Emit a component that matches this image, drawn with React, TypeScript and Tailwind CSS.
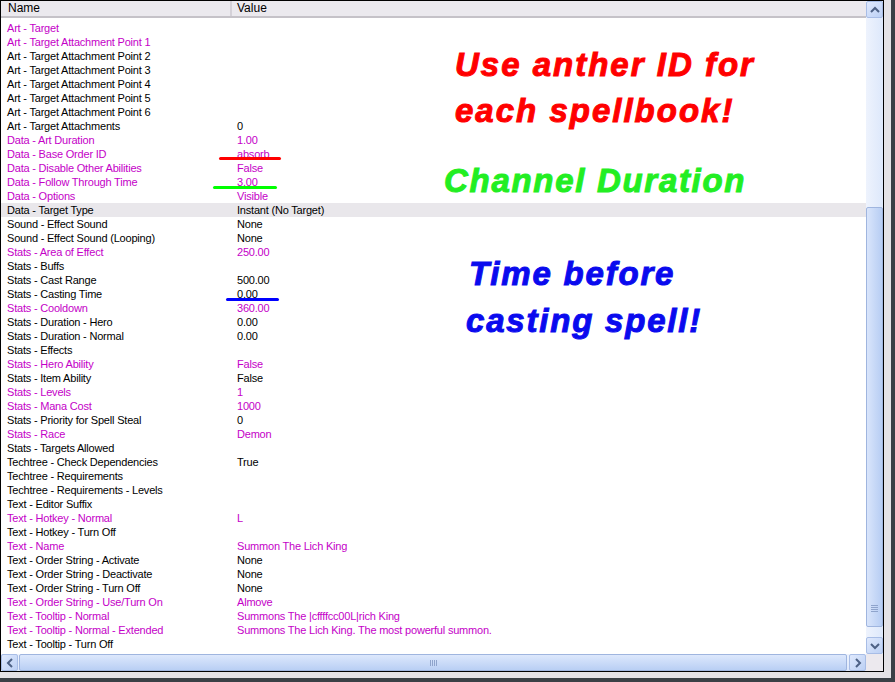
import React from 'react';

type Row = { name: string; value?: string; mod?: boolean; sel?: boolean };

const ROWS: Row[] = [
  { name: 'Art - Target', mod: true },
  { name: 'Art - Target Attachment Point 1', mod: true },
  { name: 'Art - Target Attachment Point 2' },
  { name: 'Art - Target Attachment Point 3' },
  { name: 'Art - Target Attachment Point 4' },
  { name: 'Art - Target Attachment Point 5' },
  { name: 'Art - Target Attachment Point 6' },
  { name: 'Art - Target Attachments', value: '0' },
  { name: 'Data - Art Duration', value: '1.00', mod: true },
  { name: 'Data - Base Order ID', value: 'absorb', mod: true },
  { name: 'Data - Disable Other Abilities', value: 'False', mod: true },
  { name: 'Data - Follow Through Time', value: '3.00', mod: true },
  { name: 'Data - Options', value: 'Visible', mod: true },
  { name: 'Data - Target Type', value: 'Instant (No Target)', sel: true },
  { name: 'Sound - Effect Sound', value: 'None' },
  { name: 'Sound - Effect Sound (Looping)', value: 'None' },
  { name: 'Stats - Area of Effect', value: '250.00', mod: true },
  { name: 'Stats - Buffs' },
  { name: 'Stats - Cast Range', value: '500.00' },
  { name: 'Stats - Casting Time', value: '0.00' },
  { name: 'Stats - Cooldown', value: '360.00', mod: true },
  { name: 'Stats - Duration - Hero', value: '0.00' },
  { name: 'Stats - Duration - Normal', value: '0.00' },
  { name: 'Stats - Effects' },
  { name: 'Stats - Hero Ability', value: 'False', mod: true },
  { name: 'Stats - Item Ability', value: 'False' },
  { name: 'Stats - Levels', value: '1', mod: true },
  { name: 'Stats - Mana Cost', value: '1000', mod: true },
  { name: 'Stats - Priority for Spell Steal', value: '0' },
  { name: 'Stats - Race', value: 'Demon', mod: true },
  { name: 'Stats - Targets Allowed' },
  { name: 'Techtree - Check Dependencies', value: 'True' },
  { name: 'Techtree - Requirements' },
  { name: 'Techtree - Requirements - Levels' },
  { name: 'Text - Editor Suffix' },
  { name: 'Text - Hotkey - Normal', value: 'L', mod: true },
  { name: 'Text - Hotkey - Turn Off' },
  { name: 'Text - Name', value: 'Summon The Lich King', mod: true },
  { name: 'Text - Order String - Activate', value: 'None' },
  { name: 'Text - Order String - Deactivate', value: 'None' },
  { name: 'Text - Order String - Turn Off', value: 'None' },
  { name: 'Text - Order String - Use/Turn On', value: 'Almove', mod: true },
  { name: 'Text - Tooltip - Normal', value: 'Summons The |cffffcc00L|rich King', mod: true },
  { name: 'Text - Tooltip - Normal - Extended', value: 'Summons The Lich King. The most powerful summon.', mod: true },
  { name: 'Text - Tooltip - Turn Off' },
  { name: 'Text - Tooltip - Turn Off - Extended' },
];

const ScrollBtn = ({ dir }: { dir: 'up' | 'down' | 'left' | 'right' }) => {
  const paths = {
    up: 'M3 9 L7 5 L11 9',
    down: 'M3 5 L7 9 L11 5',
    left: 'M9 3 L5 7 L9 11',
    right: 'M5 3 L9 7 L5 11',
  };
  return (
    <div className="w-[17px] h-[17px] rounded-[2px] border border-[#a8bde6] bg-gradient-to-br from-[#dfe9fd] to-[#bcd0f4] flex items-center justify-center">
      <svg width="14" height="14" viewBox="0 0 14 14">
        <path d={paths[dir]} fill="none" stroke="#4d6185" strokeWidth="2" />
      </svg>
    </div>
  );
};

export default function App() {
  return (
    <div className="w-[895px] h-[682px] bg-[#3b4046] overflow-hidden" style={{ fontFamily: '"Liberation Sans", Arial, sans-serif' }}>
      <div className="w-[891px] h-[678px] bg-[#e4e2e6] pr-[7px] pb-[6px]">
        <div className="w-[884px] h-[672px] border border-black bg-white flex flex-col relative">
          <div className="flex flex-1 min-h-0">
            {/* list */}
            <div className="flex-1 flex flex-col min-w-0">
              <div className="h-[17px] flex bg-[#ebe9ee] border-b-2 border-[#c5c2c8] text-[12px] text-black leading-[15px]">
                <div className="w-[231px] pl-[7px] border-r-2 border-[#d4d1d8]">Name</div>
                <div className="pl-[5px]">Value</div>
              </div>
              <div className="flex-1 overflow-hidden pt-[3px] text-[11px] tracking-[-0.2px]">
                {ROWS.map((r, i) => (
                  <div
                    key={i}
                    className={`h-[14px] leading-[14px] flex whitespace-nowrap ${r.sel ? 'bg-[#e9e7eb]' : ''} ${r.mod ? 'text-[#c400c8]' : 'text-black'}`}
                  >
                    <div className="w-[236px] pl-[6px]">{r.name}</div>
                    <div>{r.value}</div>
                  </div>
                ))}
              </div>
            </div>
            {/* vertical scrollbar */}
            <div className="w-[17px] flex flex-col bg-gradient-to-r from-[#eef3fd] to-[#dde8fb]">
              <ScrollBtn dir="up" />
              <div className="h-[189px]" />
              <div className="h-[420px] rounded-[2px] border border-[#9fb5df] bg-gradient-to-r from-[#d9e5fb] to-[#b7cdf3] flex items-end justify-center pb-[14px]">
                <div className="flex flex-col gap-[1px]">
                  <div className="w-[7px] h-[1px] bg-[#8fa4cc]" />
                  <div className="w-[7px] h-[1px] bg-[#8fa4cc]" />
                  <div className="w-[7px] h-[1px] bg-[#8fa4cc]" />
                  <div className="w-[7px] h-[1px] bg-[#8fa4cc]" />
                </div>
              </div>
              <div className="flex-1" />
              <ScrollBtn dir="down" />
            </div>
          </div>
          {/* horizontal scrollbar */}
          <div className="h-[17px] flex">
            <div className="flex-1 flex bg-gradient-to-b from-[#eef3fd] to-[#dde8fb]">
              <ScrollBtn dir="left" />
              <div className="flex-1 mx-[1px] rounded-[2px] border border-[#9fb5df] bg-gradient-to-b from-[#dde8fc] to-[#b9cff4] flex items-center justify-center">
                <div className="flex gap-[1px]">
                  <div className="w-[1px] h-[6px] bg-[#8fa4cc]" />
                  <div className="w-[1px] h-[6px] bg-[#8fa4cc]" />
                  <div className="w-[1px] h-[6px] bg-[#8fa4cc]" />
                  <div className="w-[1px] h-[6px] bg-[#8fa4cc]" />
                </div>
              </div>
              <div className="w-[1px]" />
              <ScrollBtn dir="right" />
            </div>
            <div className="w-[17px] bg-[#ece9ee]" />
          </div>

          {/* annotations */}
          <div className="absolute left-[218px] top-[156px] w-[62px] h-[3px] rounded-full bg-[#ff0000]" />
          <div className="absolute left-[212px] top-[185px] w-[64px] h-[3px] rounded-full bg-[#00ff00]" />
          <div className="absolute left-[225px] top-[297px] w-[53px] h-[3px] rounded-full bg-[#0000ff]" />

          <div className="absolute left-[454px] top-[41px] text-[#ff0000] text-[33px] font-black italic leading-[46px] tracking-[2px] [-webkit-text-stroke:1px_#ff0000]">
            <div>Use anther ID for</div>
            <div>each spellbook!</div>
          </div>
          <div className="absolute left-[443px] top-[158px] text-[#22ee22] text-[33px] font-black italic leading-[44px] tracking-[1.7px] [-webkit-text-stroke:1px_#22ee22]">
            Channel Duration
          </div>
          <div className="absolute left-[465px] top-[249px] text-[#0a0aee] text-[33px] font-black italic leading-[47px] tracking-[1.8px] [-webkit-text-stroke:1px_#0a0aee]">
            <div className="pl-[3px]">Time before</div>
            <div>casting spell!</div>
          </div>
        </div>
      </div>
    </div>
  );
}
